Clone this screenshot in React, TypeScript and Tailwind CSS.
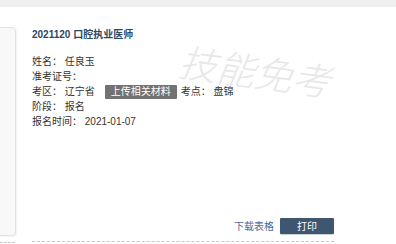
import React from "react";

const font = { fontFamily: '"Liberation Sans", "Noto Sans CJK SC", sans-serif' };

export default function App() {
  return (
    <div className="w-[396px] h-[244px] bg-white overflow-hidden flex flex-col" style={font}>
      <div className="h-[7px] bg-[#efefef] shrink-0" />
      <div className="flex pt-[20px]">
        {/* left column */}
        <div className="w-[16px] shrink-0 flex flex-col">
          <div className="h-[209px] ml-[-6px] w-[22px] bg-[#f8f8f8] border border-[#e2e2e2] rounded-r-[4px] shadow-[1px_1px_1px_rgba(0,0,0,0.05)]" />
          <div className="h-[6px]" />
          <div className="border-b border-dashed border-[#c8c8c8] w-[15px]" />
        </div>
        {/* main column */}
        <div className="ml-[16px] w-[302px] h-[215px] relative flex flex-col justify-between border-b border-dashed border-[#c8c8c8]">
          <div className="absolute left-[150px] top-[17px] text-[38px] leading-none text-[#e8e8e8] italic font-light rotate-[8deg] origin-top-left whitespace-nowrap pointer-events-none">
            技能免考
          </div>
          <div className="relative">
            <div className="text-[10px] leading-[15px] font-bold text-[#2c4766]">2021120 口腔执业医师</div>
            <div className="mt-[12px] text-[10px] leading-[15px] text-[#333333]">
              <div>姓名：&nbsp;任良玉</div>
              <div>准考证号：</div>
              <div className="flex items-center">
                <span>考区：&nbsp;辽宁省</span>
                <span className="ml-[10px] h-[14px] px-[6px] bg-[#727272] text-white rounded-[1px] flex items-center leading-[14px]">上传相关材料</span>
                <span className="ml-[4px]">考点：&nbsp;盘锦</span>
              </div>
              <div>阶段：&nbsp;报名</div>
              <div>报名时间：&nbsp;2021-01-07</div>
            </div>
          </div>
          <div className="relative flex items-center justify-end pb-[7px]">
            <span className="text-[10px] text-[#4b6b92] mr-[6px] leading-[15px]">下载表格</span>
            <span className="w-[54px] h-[16px] bg-[#3f5670] text-white text-[10px] flex items-center justify-center rounded-[1px] shadow-[0_1px_1px_rgba(0,0,0,0.2)]">打印</span>
          </div>
        </div>
      </div>
    </div>
  );
}
